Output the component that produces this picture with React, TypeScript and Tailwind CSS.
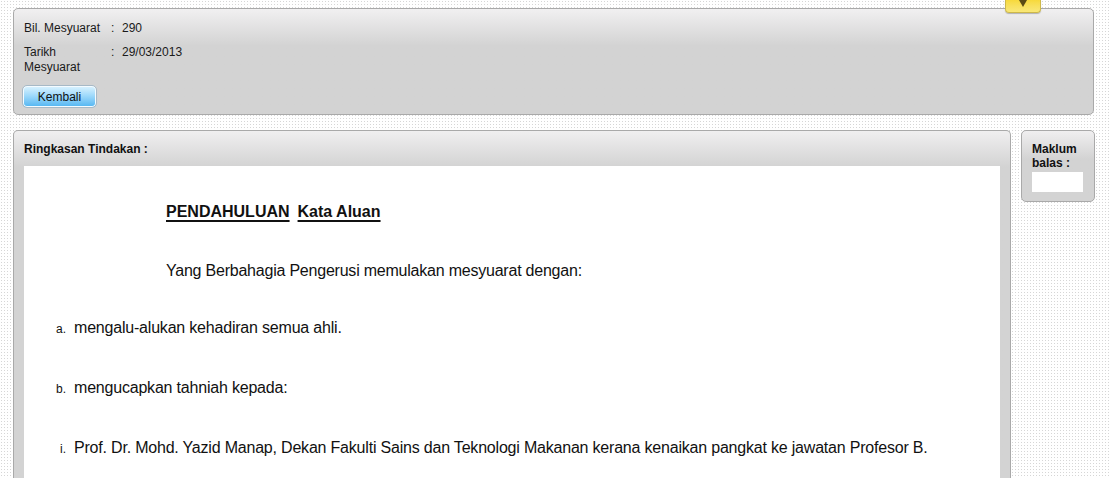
const listItems = [
  { mark: "a.", text: "mengalu-alukan kehadiran semua ahli." },
  { mark: "b.", text: "mengucapkan tahniah kepada:" },
  {
    mark: "i.",
    text: "Prof. Dr. Mohd. Yazid Manap, Dekan Fakulti Sains dan Teknologi Makanan kerana kenaikan pangkat ke jawatan Profesor B.",
  },
];

const InfoRow = ({ label, value }: { label: string; value: string }) => (
  <div className="flex items-start text-[12px] leading-[15px] text-[#1a1a1a]">
    <span className="w-[87px] pr-2">{label}</span>
    <span className="w-[11px]">:</span>
    <span>{value}</span>
  </div>
);

const App = () => (
  <div className="relative min-h-[478px] w-full overflow-hidden bg-white bg-[radial-gradient(circle,#d6d6d6_0.7px,transparent_0.9px)] bg-size-[3px_3px] font-['Liberation_Sans',Arial,sans-serif]">
    {/* yellow pull-down tab */}
    <div className="absolute left-[1005px] top-0 z-10 flex h-[13px] w-[36px] justify-center rounded-b-[4px] border border-t-0 border-[#cdb84a] bg-linear-to-b from-[#f7d93a] to-[#f9e878] shadow-[0_1px_1px_rgba(0,0,0,0.25)]">
      <svg width="10" height="8" viewBox="0 0 10 8">
        <path d="M1 0 L9 0 L5 7 Z" fill="#5a4a14" />
      </svg>
    </div>

    <div className="flex flex-col gap-[15px] pl-[13px] pt-[8px]">
      {/* meeting info */}
      <div className="h-[107px] w-[1081px] rounded-[5px] border border-[#a9a9a9] bg-linear-to-b from-[#f1f0f1] to-[#d3d3d3] to-35% px-[10px] pt-[12px]">
        <InfoRow label="Bil. Mesyuarat" value="290" />
        <div className="mt-[9px]">
          <InfoRow label="Tarikh Mesyuarat" value="29/03/2013" />
        </div>
        <button className="mt-[10px] ml-[-2px] h-[23px] w-[75px] rounded-[5px] border border-[#a7b9c6] bg-linear-to-b from-[#dcf3fe] via-[#9fdafb] via-45% to-[#4fb5f1] text-[12px] text-[#111] shadow-[inset_0_0_0_1px_#f4fbff]">
          Kembali
        </button>
      </div>

      <div className="flex items-start gap-[10px]">
        {/* summary panel */}
        <div className="h-[360px] w-[998px] rounded-t-[5px] border border-b-0 border-[#a9a9a9] bg-linear-to-b from-[#f0eff0] to-[#d3d3d3] to-[36px] px-[10px]">
          <div className="flex h-[35px] items-center text-[12px] font-bold text-[#111]">
            Ringkasan Tindakan :
          </div>
          <div className="h-[320px] bg-white pt-[37px] text-[16px] leading-[18px] text-[#111]">
            <div className="pl-[142px] font-bold">
              <span className="underline decoration-[1.5px] underline-offset-[3px]">PENDAHULUAN</span>
              <span className="ml-[8px] underline decoration-[1.5px] underline-offset-[3px]">Kata Aluan</span>
            </div>
            <p className="mt-[41px] pl-[142px] tracking-[-0.22px]">
              Yang Berbahagia Pengerusi memulakan mesyuarat dengan:
            </p>
            <div className="mt-[39px] flex flex-col gap-[41px]">
              {listItems.map((item) => (
                <div key={item.mark} className="flex items-baseline">
                  <span className="w-[50px] pr-[8px] text-right text-[12px]">{item.mark}</span>
                  <span className="tracking-[-0.2px]">{item.text}</span>
                </div>
              ))}
            </div>
          </div>
        </div>

        {/* feedback panel */}
        <div className="h-[72px] w-[74px] rounded-[5px] border border-[#a9a9a9] bg-linear-to-b from-[#f0eff0] to-[#d3d3d3] to-40% px-[10px] pt-[11px]">
          <div className="text-[12px] font-bold leading-[14px] text-[#111]">
            Maklum
            <br />
            balas :
          </div>
          <div className="mt-[2px] h-[20px] w-[51px] bg-white" />
        </div>
      </div>
    </div>
  </div>
);

export default App;
